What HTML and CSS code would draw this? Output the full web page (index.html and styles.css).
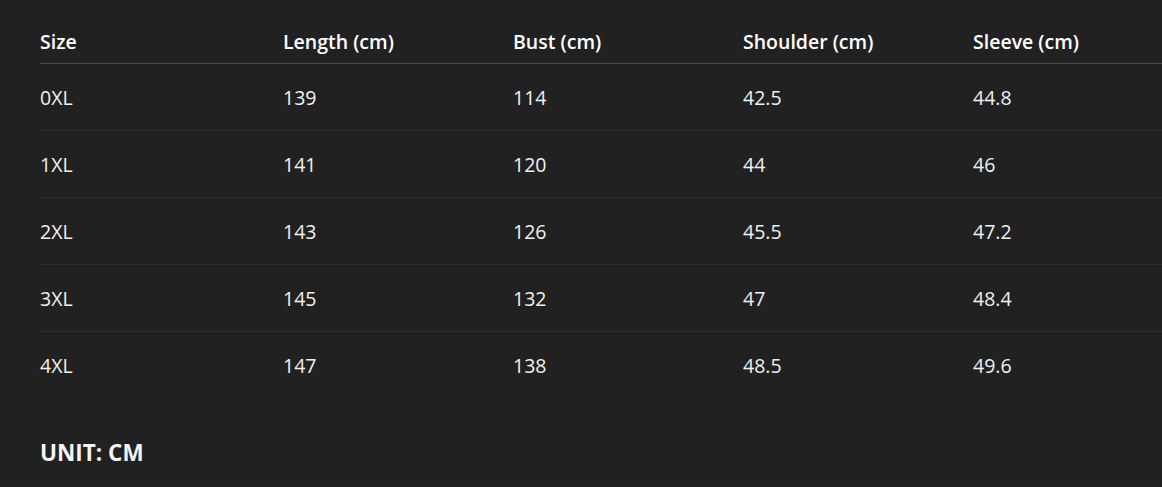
FILE: index.html
```html
<!DOCTYPE html>
<html lang="en">
<head>
<meta charset="utf-8">
<title>Size chart</title>
<link rel="stylesheet" href="styles.css">
</head>
<body>
<main class="page">
  <div class="chart">
    <div class="row head">
      <div class="cell">Size</div>
      <div class="cell">Length (cm)</div>
      <div class="cell">Bust (cm)</div>
      <div class="cell">Shoulder (cm)</div>
      <div class="cell">Sleeve (cm)</div>
    </div>
    <div class="row">
      <div class="cell">0XL</div><div class="cell">139</div><div class="cell">114</div><div class="cell">42.5</div><div class="cell">44.8</div>
    </div>
    <div class="row">
      <div class="cell">1XL</div><div class="cell">141</div><div class="cell">120</div><div class="cell">44</div><div class="cell">46</div>
    </div>
    <div class="row">
      <div class="cell">2XL</div><div class="cell">143</div><div class="cell">126</div><div class="cell">45.5</div><div class="cell">47.2</div>
    </div>
    <div class="row">
      <div class="cell">3XL</div><div class="cell">145</div><div class="cell">132</div><div class="cell">47</div><div class="cell">48.4</div>
    </div>
    <div class="row last">
      <div class="cell">4XL</div><div class="cell">147</div><div class="cell">138</div><div class="cell">48.5</div><div class="cell">49.6</div>
    </div>
  </div>
  <p class="unit">UNIT: CM</p>
</main>
</body>
</html>
```
FILE: styles.css
```css
html, body {
  margin: 0;
  padding: 0;
  background: #212121;
  overflow: hidden;
}
body {
  font-family: "Open Sans", "Noto Sans", sans-serif;
  color: #f0f0f0;
}
.page {
  padding: 19px 0 0 40px;
}
.chart {
  width: 1163px;
}
.row {
  display: grid;
  grid-template-columns: 243px 230px 230px 230px 230px;
  align-items: center;
  box-sizing: border-box;
  height: 67px;
  padding-top: 1px;
  border-bottom: 1px solid #2d2d2d;
  font-size: 19.5px;
}
.row.head {
  height: 45px;
  padding-top: 0;
  border-bottom: 1px solid #4a4a4a;
  font-weight: 600;
  color: #ffffff;
}
.row.last {
  border-bottom-color: transparent;
}
.unit {
  margin: 39px 0 0;
  font-size: 22.5px;
  font-weight: 700;
  color: #f4f4f4;
  line-height: 30px;
}
```
